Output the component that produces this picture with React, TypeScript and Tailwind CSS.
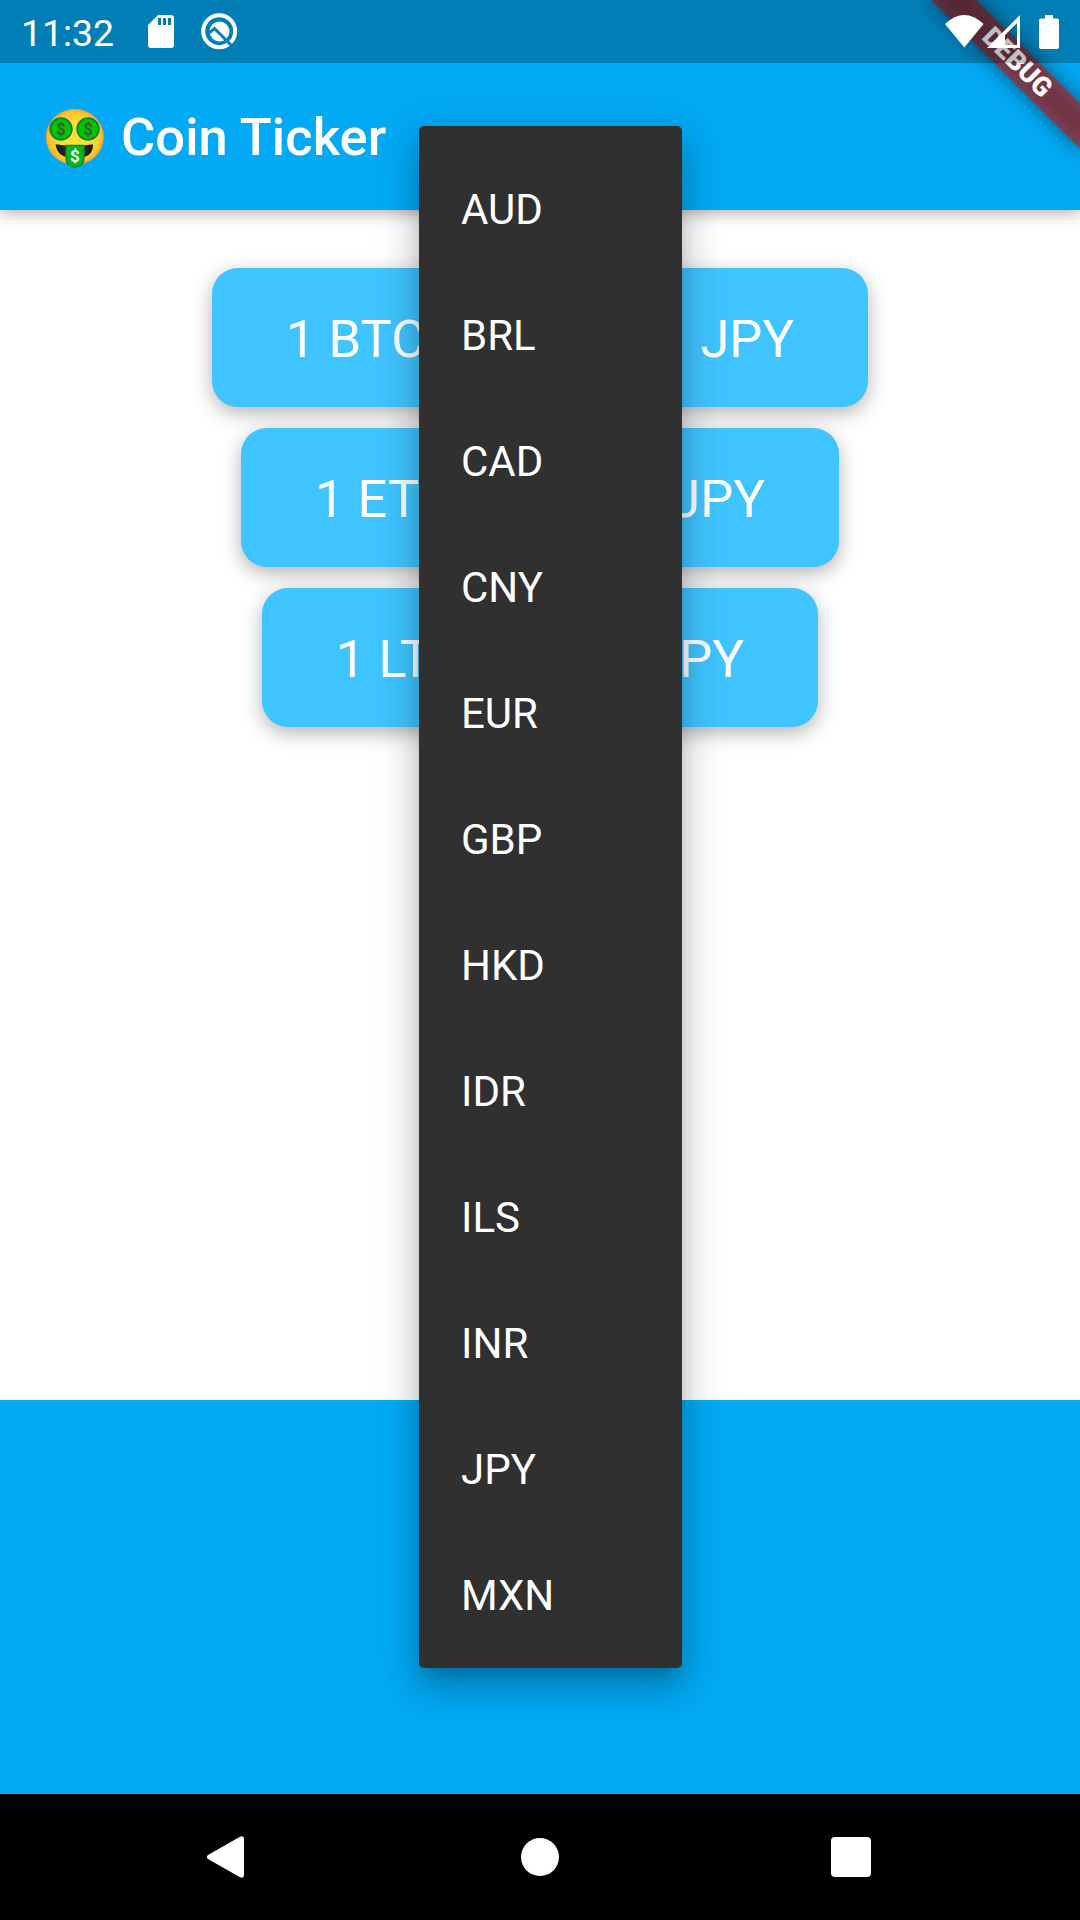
const currencies = ['AUD', 'BRL', 'CAD', 'CNY', 'EUR', 'GBP', 'HKD', 'IDR', 'ILS', 'INR', 'JPY', 'MXN'];

const rates = [
  { coin: 'BTC', width: 'w-[656px]' },
  { coin: 'ETH', width: 'w-[598px]' },
  { coin: 'LTC', width: 'w-[556px]' },
];

function MoneyFace() {
  return (
    <svg width="60" height="60" viewBox="0 0 60 60" className="mt-[2px] shrink-0">
      <defs>
        <radialGradient id="face" cx="50%" cy="50%" r="52%">
          <stop offset="0.5" stopColor="#fde030" />
          <stop offset="0.85" stopColor="#fbc62b" />
          <stop offset="1" stopColor="#f19534" />
        </radialGradient>
      </defs>
      <ellipse cx="29.8" cy="29" rx="29" ry="28" fill="url(#face)" />
      <path d="M10.5 36.2 Q30 39.5 48 36.2 Q48.5 50 30 50.5 Q12 50 10.5 36.2Z" fill="#211e20" />
      <path d="M21 37.5 H39 V49 Q39 59 30 59 Q21 59 21 49Z" fill="#00b912" stroke="#10863a" strokeWidth="1.5" />
      <circle cx="16" cy="21" r="10.8" fill="#00c400" stroke="#0a8043" strokeWidth="1.8" />
      <circle cx="43" cy="21" r="10.8" fill="#00c400" stroke="#0a8043" strokeWidth="1.8" />
      <g fontFamily="Roboto, sans-serif" textAnchor="middle">
        <text x="16" y="26.5" fontSize="16" fontWeight="700" fill="#3c5a2c">$</text>
        <text x="43" y="26.5" fontSize="16" fontWeight="700" fill="#3c5a2c">$</text>
        <text x="30" y="53.8" fontSize="17" fontWeight="700" fill="#fff">$</text>
      </g>
    </svg>
  );
}

function DebugBanner() {
  return (
    <div className="absolute top-0 right-0 h-[240px] w-[240px] overflow-hidden">
      <div className="absolute top-[47.3px] left-[71.9px] h-[31.5px] w-[210px] rotate-45 bg-black/50 blur-[10.4px]" />
      <div className="absolute top-[47.3px] left-[71.9px] flex h-[31.5px] w-[210px] rotate-45 items-center justify-center bg-[#b71c1c]/63 text-[26.8px] leading-none font-black text-white">
        DEBUG
      </div>
    </div>
  );
}

function StatusBar() {
  return (
    <div className="absolute inset-x-0 top-0 flex h-[63px] items-center bg-black/25 text-white">
      <span className="ml-[21px] w-[127px] pt-[4px] text-[37.4px] leading-none">11:32</span>
      <svg width="26" height="33" viewBox="0 0 26 33" fill="currentColor">
        <path fillRule="evenodd" d="M10 0H23Q26 0 26 3V30Q26 33 23 33H3Q0 33 0 30V10ZM10 3V10H13V3ZM15 3V10H18V3ZM20 3V10H23V3Z" />
      </svg>
      <svg width="37" height="37" viewBox="0 0 37 37" className="ml-[27px]" fill="none">
        <circle cx="18.2" cy="18.2" r="16" stroke="currentColor" strokeWidth="4" />
        <circle cx="18.5" cy="18.5" r="10" fill="currentColor" />
        <path d="M8.5 19.5L13.5 15.5L31 33" stroke="#027fb7" strokeWidth="3" />
      </svg>
      <svg width="39" height="33" viewBox="0 0 39 33" className="ml-auto" fill="currentColor">
        <path d="M0 9Q19.3-9 38.6 9L19.3 32.5Z" />
      </svg>
      <svg width="33" height="33" viewBox="0 0 33 33" className="ml-[3px]" fill="currentColor">
        <path fillRule="evenodd" d="M0 33L33 0V33ZM18 30H30V8L18 20Z" />
      </svg>
      <svg width="20" height="34" viewBox="0 0 20 34" className="mr-[21px] ml-[19px]" fill="currentColor">
        <path d="M6 0H14V3.5H18Q20 3.5 20 5.5V32Q20 34 18 34H2Q0 34 0 32V5.5Q0 3.5 2 3.5H6Z" />
      </svg>
    </div>
  );
}

function CurrencyMenu() {
  return (
    <ul className="absolute top-[126px] left-[419px] h-[1541.5px] w-[263px] rounded-[5px] bg-[#303030] pt-[21px] shadow-[0_13px_18px_-8px_rgba(0,0,0,0.2),0_21px_33px_3px_rgba(0,0,0,0.14),0_8px_45px_5px_rgba(0,0,0,0.12)]">
      {currencies.map((code) => (
        <li key={code} className="flex h-[126px] items-center pl-[42px] text-[42px] leading-none text-white">
          {code}
        </li>
      ))}
    </ul>
  );
}

export default function App() {
  return (
    <div className="relative flex h-[1920px] w-[1080px] flex-col overflow-hidden bg-white font-['Roboto',sans-serif]">
      <header className="relative flex h-[210px] shrink-0 items-center gap-[16px] bg-[#03a9f4] pt-[63px] pl-[45px] text-white shadow-[0_3px_14px_rgba(0,0,0,0.32)]">
        <MoneyFace />
        <h1 className="pt-[2px] text-[52.5px] leading-none font-medium tracking-[0.05px]">Coin Ticker</h1>
      </header>

      <main className="flex flex-1 flex-col items-center gap-[21px] pt-[58px]">
        {rates.map(({ coin, width }) => (
          <div
            key={coin}
            className={`${width} flex h-[139px] items-center justify-between rounded-[26px] bg-[#40c4ff] px-[74px] pt-[3px] text-[52.5px] leading-none text-white shadow-[0_6px_20px_rgba(0,0,0,0.3)]`}
          >
            <span>1 {coin}</span>
            <span>JPY</span>
          </div>
        ))}
      </main>

      <section className="h-[394px] shrink-0 bg-[#03a9f4]" />

      <nav className="flex h-[126px] shrink-0 items-center bg-black pl-[206px] text-white">
        <svg width="38" height="42" viewBox="0 0 38 42" fill="currentColor">
          <path d="M2 19L34 .7Q38-.7 38 3V39Q38 42.7 34 41.3L2 23Q-.5 21 2 19Z" />
        </svg>
        <div className="ml-[277px] h-[38px] w-[38px] rounded-full bg-white" />
        <div className="ml-[272px] h-[40px] w-[40px] rounded-[4px] bg-white" />
      </nav>

      <DebugBanner />
      <CurrencyMenu />
      <StatusBar />
    </div>
  );
}
